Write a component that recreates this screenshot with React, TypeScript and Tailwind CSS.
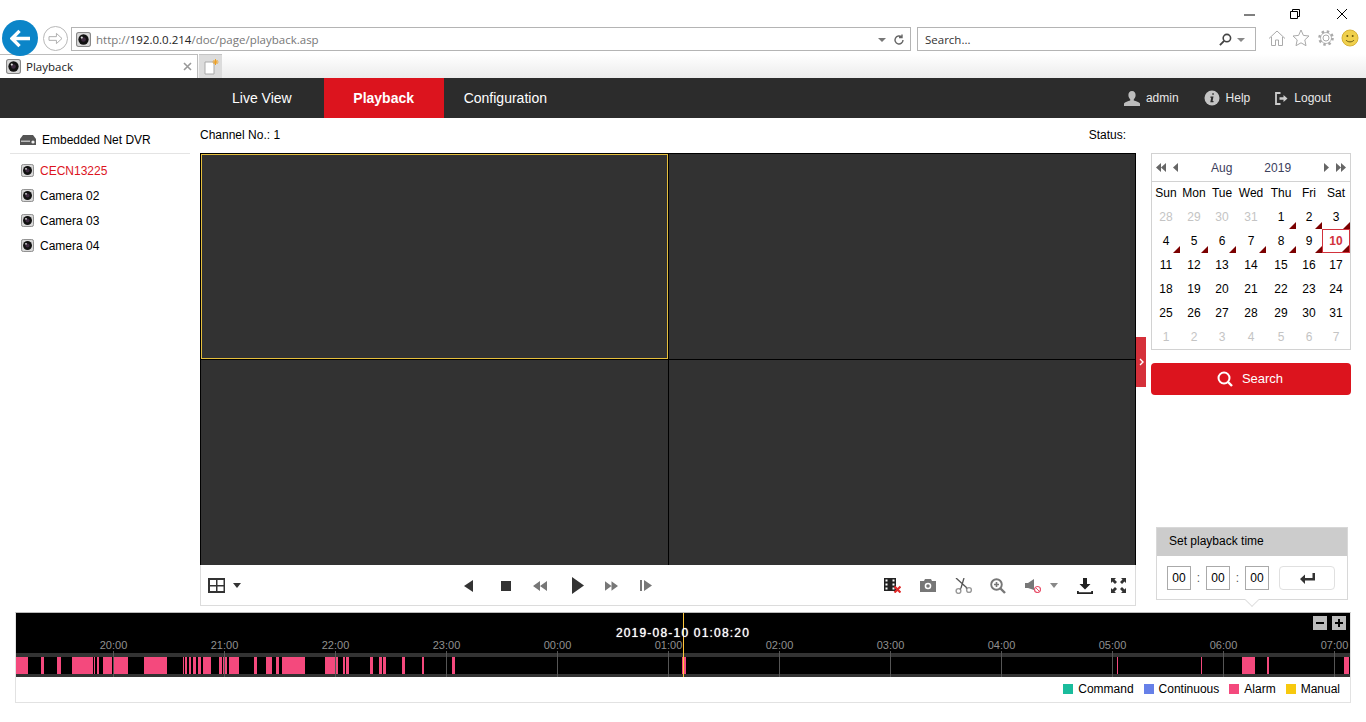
import type { ReactNode } from 'react'

const weekDays = ['Sun', 'Mon', 'Tue', 'Wed', 'Thu', 'Fri', 'Sat']

// day, is it in the shown month, does it have recordings
const calendarDays: [number, boolean, boolean][] = [
  [28, false, false], [29, false, false], [30, false, false], [31, false, false], [1, true, true], [2, true, true], [3, true, true],
  [4, true, true], [5, true, true], [6, true, true], [7, true, true], [8, true, true], [9, true, true], [10, true, true],
  [11, true, false], [12, true, false], [13, true, false], [14, true, false], [15, true, false], [16, true, false], [17, true, false],
  [18, true, false], [19, true, false], [20, true, false], [21, true, false], [22, true, false], [23, true, false], [24, true, false],
  [25, true, false], [26, true, false], [27, true, false], [28, true, false], [29, true, false], [30, true, false], [31, true, false],
  [1, false, false], [2, false, false], [3, false, false], [4, false, false], [5, false, false], [6, false, false], [7, false, false],
]

const cameras = ['CECN13225', 'Camera 02', 'Camera 03', 'Camera 04']

const ticks = ['20:00', '21:00', '22:00', '23:00', '00:00', '01:00', '02:00', '03:00', '04:00', '05:00', '06:00', '07:00']

// alarm spans in px along the time bar
const alarmSpans: [number, number][] = [
  [0, 12], [25, 28], [41, 45], [56, 77], [78, 79], [81, 83], [87, 96], [98, 112], [128, 151],
  [167, 168], [169, 171], [173, 175], [177, 180], [182, 185], [187, 195], [203, 206], [207, 211], [213, 223],
  [238, 241], [250, 256], [260, 263], [266, 289], [309, 322], [327, 329], [330, 333], [354, 357], [363, 366],
  [367, 370], [386, 389], [406, 408], [436, 439], [666, 670], [1101, 1102], [1185, 1186], [1226, 1239], [1251, 1253], [1328, 1333],
]

const legend = [
  { label: 'Command', color: 'bg-[#1abc9c]' },
  { label: 'Continuous', color: 'bg-[#6680e8]' },
  { label: 'Alarm', color: 'bg-[#f4497d]' },
  { label: 'Manual', color: 'bg-[#f7c90e]' },
]

function CamIcon({ className }: { className: string }) {
  return (
    <svg viewBox="0 0 14 14" className={className}>
      <rect x="0.5" y="0.5" width="13" height="13" rx="2" fill="#d8d8d8" stroke="#888" />
      <circle cx="7" cy="7" r="4.8" fill="#111" />
      <circle cx="7" cy="7" r="2.2" fill="#3d2b3f" />
      <circle cx="5.4" cy="5.2" r="1" fill="#ddd" />
    </svg>
  )
}

function BrowserChrome() {
  return (
    <div className="h-[78px] flex flex-col bg-white">
      <div className="h-[27px] flex items-center justify-end">
        <svg viewBox="0 0 12 12" className="w-[12px] h-[12px] mr-[33px]"><path d="M0 7h11" stroke="#000" strokeWidth="1" /></svg>
        <svg viewBox="0 0 12 12" className="w-[12px] h-[12px] mr-[35px]"><path d="M1.5 3.5h7v7h-7zM3.5 3V1.5h7v7H9" fill="none" stroke="#000" /></svg>
        <svg viewBox="0 0 12 12" className="w-[12px] h-[12px] mr-[18px]"><path d="M1 1l10 10M11 1L1 11" stroke="#000" /></svg>
      </div>
      <div className="h-[27px] flex items-start relative">
        <div className="absolute left-[2px] top-[-7px] w-[36px] h-[36px] rounded-full bg-[#0b85c8] flex items-center justify-center">
          <svg viewBox="0 0 22 20" className="w-[21px] h-[19px]"><path d="M10 2L2 10l8 8M2.5 10H21" fill="none" stroke="#fff" strokeWidth="3.6" /></svg>
        </div>
        <div className="absolute left-[43px] top-[-1px] w-[25px] h-[25px] rounded-full border border-[#b8b8b8] bg-white flex items-center justify-center">
          <svg viewBox="0 0 16 14" className="w-[15px] h-[13px]"><path d="M1 5h8V1.5L15 7l-6 5.5V9H1z" fill="none" stroke="#aaa" /></svg>
        </div>
        <div className="ml-[71px] w-[840px] h-[24px] border border-[#b4b4b4] flex items-center pl-[4px] pr-[5px] pt-[1px] font-['Open_Sans',sans-serif] text-[11.5px]">
          <CamIcon className="w-[15px] h-[15px]" />
          <span className="ml-[5px] text-[#777]">http://<span className="text-[#222]">192.0.0.214</span>/doc/page/playback.asp</span>
          <svg viewBox="0 0 8 4" className="ml-auto w-[8px] h-[4px]"><path d="M0 0h8L4 4z" fill="#777" /></svg>
          <svg viewBox="0 0 12 12" className="ml-[7px] w-[12px] h-[12px]"><path d="M10 6a4 4 0 1 1-1.3-3M9 0.5V3.5H6" fill="none" stroke="#666" strokeWidth="1.4" /></svg>
        </div>
        <div className="ml-[6px] w-[339px] h-[24px] border border-[#b4b4b4] flex items-center pl-[7px] pr-[10px] pt-[1px] font-['Open_Sans',sans-serif] text-[11.5px] text-[#333]">
          <span>Search...</span>
          <svg viewBox="0 0 14 14" className="ml-auto w-[13px] h-[13px]"><circle cx="8.5" cy="5.5" r="4" fill="none" stroke="#444" strokeWidth="1.7" /><path d="M5.5 8.5L1 13" stroke="#444" strokeWidth="2" /></svg>
          <svg viewBox="0 0 8 4" className="ml-[5px] w-[8px] h-[4px]"><path d="M0 0h8L4 4z" fill="#888" /></svg>
        </div>
        <svg viewBox="0 0 18 18" className="ml-[12px] mt-[2px] w-[18px] h-[18px]"><path d="M1 9.5L9 2l8 7.5M3.5 8v8.5h4V11h3v5.5h4V8" fill="none" stroke="#aaa" /></svg>
        <svg viewBox="0 0 18 18" className="ml-[6px] mt-[2px] w-[18px] h-[18px]"><path d="M9 1l2.4 5.4 5.6.6-4.2 3.9 1.2 5.8L9 13.8 4 16.7l1.2-5.8L1 7l5.6-.6z" fill="none" stroke="#aaa" /></svg>
        <svg viewBox="0 0 18 18" className="ml-[7px] mt-[2px] w-[18px] h-[18px]"><circle cx="9" cy="9" r="3" fill="none" stroke="#aaa" /><circle cx="9" cy="9" r="6.500" fill="none" stroke="#aaa" strokeWidth="2.6" strokeDasharray="2.400 2.700" /><circle cx="9" cy="9" r="5.500" fill="none" stroke="#aaa" strokeWidth="0.8" /></svg>
        <svg viewBox="0 0 18 18" className="ml-[6px] mt-[2px] w-[18px] h-[18px]"><circle cx="9" cy="9" r="8" fill="#f0d04c" stroke="#d8b238" /><circle cx="6.3" cy="7" r="1" fill="#6b5a10" /><circle cx="11.7" cy="7" r="1" fill="#6b5a10" /><path d="M5 11c1.5 2.5 6.5 2.5 8 0" fill="none" stroke="#6b5a10" /></svg>
      </div>
      <div className="h-[24px] flex bg-gradient-to-b from-white to-[#ececec]">
        <div className="w-[198px] h-[24px] bg-white border-t border-r border-[#bcbcbc] flex items-center pl-[6px] pr-[5px] font-['Open_Sans',sans-serif] text-[11.5px] text-[#222]">
          <CamIcon className="w-[15px] h-[15px]" />
          <span className="ml-[5px]">Playback</span>
          <svg viewBox="0 0 9 9" className="ml-auto w-[9px] h-[9px]"><path d="M1 1l7 7M8 1L1 8" stroke="#999" strokeWidth="1.6" /></svg>
        </div>
        <div className="ml-[1px] w-[23px] h-[24px] bg-[#dcdcdc] border-t border-[#c4c4c4] flex items-center justify-center">
          <svg viewBox="0 0 16 17" className="w-[16px] h-[17px]"><path d="M2 4h9v12H2z" fill="#fff" stroke="#aaa" /><path d="M12.5 1v6M9.5 4h6M10.5 2l4 4M14.5 2l-4 4" stroke="#f0a020" strokeWidth="1" /></svg>
        </div>
      </div>
    </div>
  )
}

function NavBar() {
  return (
    <div className="h-[40px] bg-[#2c2c2c] flex items-center pl-[212px] pr-[35px] text-[14px] text-white">
      <div className="px-5">Live View</div>
      <div className="ml-3 w-[120px] h-full bg-[#dc141e] flex items-center justify-center font-bold">Playback</div>
      <div className="px-5">Configuration</div>
      <div className="ml-auto flex items-center text-[12px] text-[#e8e8e8]">
        <svg viewBox="0 0 16 15" className="w-[16px] h-[15px]"><path d="M8 0c2.4 0 3.6 1.8 3.6 4 0 2-.9 3.4-1.8 4.2v1.3c2 .8 5.5 1.5 6.2 3V15H0v-2.500c.7-1.500 4.200-2.200 6.200-3V8.200C5.300 7.400 4.400 6 4.400 4 4.400 1.800 5.600 0 8 0z" fill="#bdbdbd" /></svg>
        <span className="ml-[6px]">admin</span>
        <svg viewBox="0 0 16 16" className="ml-[25px] w-[16px] h-[16px]"><circle cx="8" cy="8" r="7.500" fill="#c4c4c4" /><path d="M8.300 3.200h1.500v1.600H8.300zM6.500 6.500h3L8.600 11h1l-.2 1.300H6.300L7.200 7.800h-.9z" fill="#2c2c2c" /></svg>
        <span className="ml-[6px]">Help</span>
        <svg viewBox="0 0 13 13" className="ml-[25px] w-[13px] h-[13px]"><path d="M5.500 1H1v11h4.500" fill="none" stroke="#ccc" strokeWidth="1.800" /><path d="M4.500 5.200h4V3l4 3.500-4 3.500V7.800h-4z" fill="#ccc" /></svg>
        <span className="ml-[6px]">Logout</span>
      </div>
    </div>
  )
}

function Sidebar() {
  return (
    <div className="w-[200px] shrink-0 pl-[10px] pr-[10px] text-[12px] text-black">
      <div className="h-[36px] flex items-center border-b border-[#e4e4e4] pl-[10px] pt-[8px]">
        <svg viewBox="0 0 16 10" className="w-[16px] h-[10px]"><path d="M3 0h10l3 4v6H0V4z" fill="#555" /><rect x="1" y="5.500" width="9" height="1.500" fill="#bbb" /><circle cx="13" cy="7" r="1.600" fill="#eee" /></svg>
        <span className="ml-[6px]">Embedded Net DVR</span>
      </div>
      <div className="pt-[4px]">
        {cameras.map((name, i) => (
          <div key={name} className="h-[25px] flex items-center pl-[11px]">
            <CamIcon className="w-[13px] h-[13px]" />
            <span className={`ml-[6px] ${i === 0 ? 'text-[#dc141e]' : ''}`}>{name}</span>
          </div>
        ))}
      </div>
    </div>
  )
}

function ToolIcon({ vb, className, children }: { vb: string; className: string; children: ReactNode }) {
  return <svg viewBox={vb} className={className}>{children}</svg>
}

function Toolbar() {
  return (
    <div className="h-[41px] flex items-center bg-white border-x border-b border-[#dcdcdc] pt-[1px]">
      <ToolIcon vb="0 0 17 15" className="ml-[7px] w-[17px] h-[15px]">
        <rect width="17" height="15" fill="#333" />
        <path d="M2 2h6v5H2zM9.500 2h6v5h-6zM2 8.500h6V13H2zM9.500 8.500h6V13h-6z" fill="#fff" />
      </ToolIcon>
      <ToolIcon vb="0 0 8 5" className="ml-[8px] w-[8px] h-[5px]"><path d="M0 0h8L4 5z" fill="#333" /></ToolIcon>
      <ToolIcon vb="0 0 9 12" className="ml-[223px] w-[9px] h-[12px]"><path d="M9 0v12L0 6z" fill="#333" /></ToolIcon>
      <ToolIcon vb="0 0 10 10" className="ml-[28px] w-[10px] h-[10px]"><rect width="10" height="10" fill="#333" /></ToolIcon>
      <ToolIcon vb="0 0 14 10" className="ml-[22px] w-[14px] h-[10px]"><path d="M7 0v10L0 5zM14 0v10L7 5z" fill="#777" /></ToolIcon>
      <ToolIcon vb="0 0 12 17" className="ml-[25px] w-[12px] h-[17px]"><path d="M0 0v17l12-8.500z" fill="#333" /></ToolIcon>
      <ToolIcon vb="0 0 14 10" className="ml-[21px] w-[13px] h-[10px]"><path d="M0 0v10l7-5zM7 0v10l7-5z" fill="#777" /></ToolIcon>
      <ToolIcon vb="0 0 12 11" className="ml-[22px] w-[12px] h-[11px]"><path d="M0 0h2v11H0zM4 0v11l8-5.500z" fill="#777" /></ToolIcon>
      <ToolIcon vb="0 0 17 15" className="ml-[232px] w-[17px] h-[15px]">
        <path d="M0 0h12v13H0z" fill="#222" />
        <path d="M1.500 1.500h2v2h-2zM1.500 5.500h2v2h-2zM1.500 9.500h2v2h-2zM8.500 1.500h2v2h-2zM8.500 5.500h2v2h-2zM8.500 9.500h2v2h-2z" fill="#fff" />
        <path d="M10.500 8.500l6 6M16.500 8.500l-6 6" stroke="#e02a2a" strokeWidth="2.200" />
      </ToolIcon>
      <ToolIcon vb="0 0 16 13" className="ml-[19px] w-[16px] h-[13px]">
        <path d="M0 2h4l1-2h6l1 2h4v11H0z" fill="#777" /><circle cx="8" cy="7" r="3.300" fill="#fff" /><circle cx="8" cy="7" r="1.800" fill="#777" />
      </ToolIcon>
      <ToolIcon vb="0 0 18 16" className="ml-[19px] w-[18px] h-[16px]">
        <path d="M1 0l11 10M9 0L6 10" stroke="#555" strokeWidth="1.300" fill="none" />
        <circle cx="3.500" cy="13" r="2.400" fill="none" stroke="#999" strokeWidth="1.400" />
        <circle cx="14" cy="12" r="2.400" fill="none" stroke="#999" strokeWidth="1.400" />
        <path d="M5 11.500l1-1.500M12 10.800L11 10" stroke="#777" strokeWidth="1.400" />
      </ToolIcon>
      <ToolIcon vb="0 0 16 16" className="ml-[17px] w-[16px] h-[16px]">
        <circle cx="6.500" cy="6.500" r="5.300" fill="none" stroke="#777" strokeWidth="1.900" />
        <path d="M4 6.500h5M6.500 4v5" stroke="#777" strokeWidth="1.600" />
        <path d="M10.500 10.500L15 15" stroke="#777" strokeWidth="2.400" />
      </ToolIcon>
      <ToolIcon vb="0 0 16 14" className="ml-[19px] w-[16px] h-[14px]">
        <path d="M0 4h3l6-4v11L3 9H0z" fill="#777" />
        <circle cx="12.500" cy="10.500" r="3" fill="#fff" stroke="#e8506a" strokeWidth="1.200" />
        <path d="M10.500 8.500l4 4" stroke="#e8506a" />
      </ToolIcon>
      <ToolIcon vb="0 0 8 5" className="ml-[9px] w-[8px] h-[5px]"><path d="M0 0h8L4 5z" fill="#888" /></ToolIcon>
      <ToolIcon vb="0 0 16 16" className="ml-[19px] w-[16px] h-[16px]">
        <path d="M6 0h4v6h3.500L8 11.500 2.500 6H6zM0 13h1.800v1.200h12.400V13H16v3H0z" fill="#222" />
      </ToolIcon>
      <ToolIcon vb="0 0 15 15" className="ml-[18px] w-[15px] h-[15px]">
        <path d="M0 0h5L3.500 1.500 6 4 4 6 1.500 3.500 0 5zM15 0v5l-1.500-1.500L11 6 9 4l2.500-2.500L10 0zM0 15v-5l1.500 1.500L4 9l2 2-2.500 2.500L5 15zM15 15h-5l1.500-1.500L9 11l2-2 2.500 2.500L15 10z" fill="#333" />
      </ToolIcon>
    </div>
  )
}

function VideoArea() {
  return (
    <div className="w-[936px] shrink-0 text-[12px] text-black">
      <div className="h-[35px] flex items-center justify-between pr-[10px] pb-[2px]">
        <span>Channel No.: 1</span>
        <span>Status:</span>
      </div>
      <div className="h-[412px] bg-black p-[1px] grid grid-cols-[467px_466px] grid-rows-[205px_205px] gap-[1px] relative">
        <div className="bg-[#323232] border border-[#e6bf3c]" />
        <div className="bg-[#323232]" />
        <div className="bg-[#323232]" />
        <div className="bg-[#323232]" />
      </div>
      <Toolbar />
    </div>
  )
}

function Calendar() {
  return (
    <div className="w-[200px] border border-[#d2d2d2] text-[12px]">
      <div className="h-[28px] flex items-center border-b border-[#d2d2d2] text-[#3c405c] pl-[4px] pr-[4px]">
        <svg viewBox="0 0 10 9" className="w-[10px] h-[9px]"><path d="M5 0v9L0 4.500zM10 0v9L5 4.500z" fill="#666" /></svg>
        <svg viewBox="0 0 5 9" className="ml-[7px] w-[5px] h-[9px]"><path d="M5 0v9L0 4.500z" fill="#666" /></svg>
        <span className="ml-[33px]">Aug</span>
        <span className="ml-[32px]">2019</span>
        <svg viewBox="0 0 5 9" className="ml-auto w-[5px] h-[9px]"><path d="M0 0v9l5-4.500z" fill="#666" /></svg>
        <svg viewBox="0 0 10 9" className="ml-[7px] w-[10px] h-[9px]"><path d="M0 0v9l5-4.500zM5 0v9l5-4.500z" fill="#666" /></svg>
      </div>
      <div className="grid grid-cols-[28px_28px_28px_30px_30px_26px_28px] h-[23px] pb-[2px] items-center text-center text-black">
        {weekDays.map((d) => <div key={d}>{d}</div>)}
      </div>
      <div className="grid grid-cols-[28px_28px_28px_30px_30px_26px_28px] auto-rows-[24px]">
        {calendarDays.map(([day, inMonth, rec], i) => {
          const selected = inMonth && day === 10
          const tone = selected ? 'border border-[#d2323c] text-[#d2323c] font-bold' : inMonth ? 'text-black' : 'text-[#c4c4c4]'
          return (
            <div key={i} className={`relative flex items-center justify-center ${tone}`}>
              {day}
              {rec && <div className="absolute right-0 bottom-0 w-0 h-0 border-l-[7px] border-l-transparent border-b-[7px] border-b-[#7b0000]" />}
            </div>
          )
        })}
      </div>
    </div>
  )
}

function PlaybackTime() {
  return (
    <div className="relative ml-[5px] mr-[3px] w-[192px] h-[73px] border border-[#d8d8d8] text-[12px] text-black bg-white">
      <div className="h-[28px] bg-[#cccccc] flex items-center pl-[12px] pb-[2px]">Set playback time</div>
      <div className="h-[44px] flex items-center pl-[10px]">
        <div className="w-[24px] h-[24px] border border-[#aaa] flex items-center justify-center">00</div>
        <span className="w-[15px] text-center text-[#555]">:</span>
        <div className="w-[24px] h-[24px] border border-[#aaa] flex items-center justify-center">00</div>
        <span className="w-[15px] text-center text-[#555]">:</span>
        <div className="w-[24px] h-[24px] border border-[#aaa] flex items-center justify-center">00</div>
        <div className="ml-[10px] w-[56px] h-[24px] border border-[#e0e0e0] rounded-[4px] flex items-center justify-center">
          <svg viewBox="0 0 15 11" className="w-[15px] h-[11px]"><path d="M15 0v7.500H5V11L0 6l5-4.500V5h7.500V0z" fill="#333" /></svg>
        </div>
      </div>
      <div className="absolute left-[90px] bottom-[-6px] w-[10px] h-[10px] rotate-45 bg-white border-r border-b border-[#e0e0e0]" />
    </div>
  )
}

function RightPanel() {
  return (
    <div className="relative w-[215px] shrink-0 pl-[15px] pt-[35px] pb-[12px] flex flex-col text-[12px]">
      <button className="absolute left-0 top-[219px] w-[10px] h-[50px] bg-[#d5303a] flex items-center justify-center">
        <svg viewBox="0 0 5 8" className="w-[5px] h-[8px]"><path d="M1 1l3 3-3 3" fill="none" stroke="#fff" strokeWidth="1.400" /></svg>
      </button>
      <Calendar />
      <div className="mt-[13px] w-[200px] h-[32px] rounded-[4px] bg-[#dc141e] flex items-center justify-center pr-[2px] text-[13px] text-white shrink-0">
        <svg viewBox="0 0 16 16" className="w-[16px] h-[16px]"><circle cx="7" cy="7" r="5.500" fill="none" stroke="#fff" strokeWidth="2" /><path d="M11 11l4 4" stroke="#fff" strokeWidth="2.400" /></svg>
        <span className="ml-[9px]">Search</span>
      </div>
      <div className="mt-auto">
        <PlaybackTime />
      </div>
    </div>
  )
}

function Timeline() {
  return (
    <div className="mx-[15px] h-[91px] border border-[#e2e2e2] border-t-[#bbb] text-[12px]">
      <div className="relative h-[64px] bg-black overflow-hidden">
        <div className="absolute left-0 right-0 top-[40px] h-[4px] bg-[#333]" />
        <div className="absolute left-0 right-0 bottom-0 h-[3px] bg-[#333]" />
        {alarmSpans.map(([from, to]) => (
          <div key={from} className="absolute top-[44px] h-[17px] bg-[#f4497d]" style={{ left: from, width: to - from }} />
        ))}
        {ticks.map((t, i) => (
          <div key={t}>
            <div className="absolute top-[38px] h-[26px] w-[1px] bg-[#555]" style={{ left: 97 + i * 111 }} />
            <div className="absolute top-[26px] w-[40px] text-center text-[11px] leading-[13px] text-[#909090]" style={{ left: 77.500 + i * 111 }}>{t}</div>
          </div>
        ))}
        <div className="absolute left-[667px] top-0 h-[64px] w-[1px] bg-[#ffc73a]" />
        <div className="absolute left-[567px] top-[13px] w-[200px] text-center text-[12px] leading-[14px] tracking-[1.200px] text-white [text-shadow:0_0_1px_#fff]">2019-08-10 01:08:20</div>
        <div className="absolute right-[4px] top-[3px] flex gap-[5px]">
          <div className="w-[14px] h-[14px] bg-[#bbb] flex items-center justify-center"><div className="w-[8px] h-[2px] bg-black" /></div>
          <div className="w-[14px] h-[14px] bg-[#bbb] flex items-center justify-center text-black">
            <svg viewBox="0 0 8 8" className="w-[8px] h-[8px]"><path d="M3 0h2v3h3v2H5v3H3V5H0V3h3z" fill="#000" /></svg>
          </div>
        </div>
      </div>
      <div className="h-[25px] flex items-center justify-end gap-[10px] pr-[10px] pb-[2px] text-black">
        {legend.map((l) => (
          <div key={l.label} className="flex items-center gap-[5px]">
            <div className={`w-[10px] h-[10px] ${l.color}`} />
            <span>{l.label}</span>
          </div>
        ))}
      </div>
    </div>
  )
}

export default function App() {
  return (
    <div className="w-[1366px] h-[722px] overflow-hidden bg-white font-['Liberation_Sans',Arial,sans-serif]">
      <BrowserChrome />
      <NavBar />
      <div className="h-[494px] flex">
        <Sidebar />
        <VideoArea />
        <RightPanel />
      </div>
      <Timeline />
    </div>
  )
}
